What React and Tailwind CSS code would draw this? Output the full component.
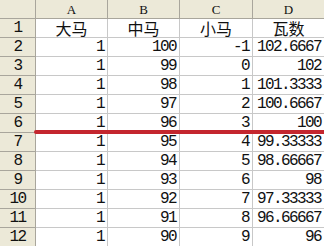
import React from 'react';

const rows = [
  ['大马', '中马', '小马', '瓦数'],
  ['1', '100', '-1', '102.6667'],
  ['1', '99', '0', '102'],
  ['1', '98', '1', '101.3333'],
  ['1', '97', '2', '100.6667'],
  ['1', '96', '3', '100'],
  ['1', '95', '4', '99.33333'],
  ['1', '94', '5', '98.66667'],
  ['1', '93', '6', '98'],
  ['1', '92', '7', '97.33333'],
  ['1', '91', '8', '96.66667'],
  ['1', '90', '9', '96'],
];

const num = "font-['Liberation_Mono',monospace] text-[16px] tracking-[-1.6px]";
const cjk = "font-['Noto_Sans_CJK_SC',sans-serif] text-[16px]";

const App = () => (
  <div className="relative w-[324px] h-[246px] overflow-hidden bg-white text-[#111]">
    <div className="grid grid-cols-[36px_72px_72px_73px_72px]">
      <div className="h-[19px] bg-[#ECE9D8] border-r border-b border-[#A9A69C]" />
      {['A', 'B', 'C', 'D'].map((c) => (
        <div
          key={c}
          className="h-[19px] bg-[#ECE9D8] border-r border-b border-[#A9A69C] flex items-center justify-center font-['Liberation_Serif',serif] text-[13px] leading-none pt-[1px]"
        >
          {c}
        </div>
      ))}
      {rows.map((r, i) => (
        <React.Fragment key={i}>
          <div className={`h-[19px] bg-[#ECE9D8] border-r border-b border-[#A9A69C] flex items-end justify-center pb-[1px] leading-none ${num}`}>
            {i + 1}
          </div>
          {r.map((v, j) =>
            i === 0 ? (
              <div
                key={j}
                className={`h-[19px] border-r border-b border-[#C8C8C8] flex items-end justify-center leading-none pb-[1px] ${cjk}`}
              >
                {v}
              </div>
            ) : (
              <div
                key={j}
                className={`h-[19px] border-r border-b border-[#C8C8C8] flex items-end justify-end pr-[3px] pb-[1px] leading-none ${num}`}
              >
                {v}
              </div>
            )
          )}
        </React.Fragment>
      ))}
    </div>
    <div className="absolute left-[34px] top-[130px] w-[292px] h-[4px] rounded-l-full bg-[#C4262E]" />
  </div>
);

export default App;
